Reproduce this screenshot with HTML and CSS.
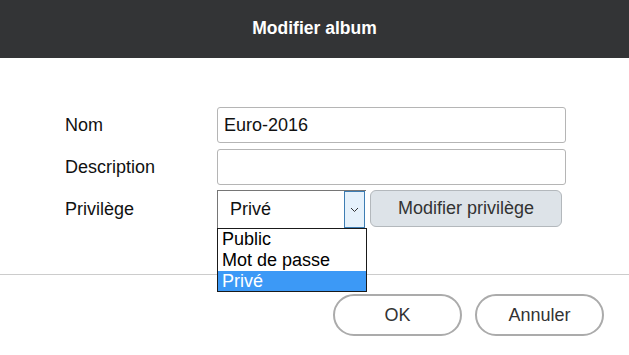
FILE: index.html
```html
<!DOCTYPE html>
<html lang="fr">
<head>
  <meta charset="utf-8">
  <title>Modifier album</title>
  <link rel="stylesheet" href="styles.css">
</head>
<body>
  <div class="dialog">
    <header class="dialog-head">Modifier album</header>

    <div class="form">
      <label class="form-label" for="album-name">Nom</label>
      <input class="field" id="album-name" type="text" value="Euro-2016">

      <label class="form-label" for="album-desc">Description</label>
      <input class="field" id="album-desc" type="text" value="">

      <span class="form-label">Privilège</span>
      <div class="privilege">
        <div class="select">
          <span class="select-value">Privé</span>
          <span class="select-arrow">
            <svg width="9" height="6" viewBox="0 0 9 6"><path d="M1 1l3.5 3.5L8 1" fill="none" stroke="#333" stroke-width="1"/></svg>
          </span>
          <ul class="select-list">
            <li>Public</li>
            <li>Mot de passe</li>
            <li class="is-selected">Privé</li>
          </ul>
        </div>
        <button class="button-grey" type="button">Modifier privilège</button>
      </div>
    </div>

    <footer class="dialog-foot">
      <button class="button-round" type="button">OK</button>
      <button class="button-round" type="button">Annuler</button>
    </footer>
  </div>
</body>
</html>
```

FILE: styles.css
```css
*, *::before, *::after {
  margin: 0;
  padding: 0;
  box-sizing: border-box;
}

body {
  background-color: #FFFFFF;
  color: #222222;
  font-size: 18px;
  font-family: "Liberation Sans", Arial, sans-serif;
}

.dialog-head {
  height: 58px;
  background-color: #333436;
  color: #FFFFFF;
  font-size: 17.5px;
  font-weight: bold;
  line-height: 56px;
  text-align: center;
}

.form {
  display: grid;
  grid-template-columns: 152px 349px;
  grid-auto-rows: 36px;
  row-gap: 6px;
  align-items: center;
  padding: 49px 0 0 65px;
  height: 216px;
}

.form-label {
  color: #111111;
}

.field {
  width: 100%;
  height: 100%;
  border: 1px solid #B5B5B5;
  border-radius: 3px;
  padding: 0 6px;
  color: #111111;
  font-size: 18px;
  font-family: inherit;
}

.privilege {
  display: flex;
  gap: 4px;
  height: 38px;
}

.select {
  position: relative;
  display: flex;
  align-items: center;
  width: 149px;
  border-top: 1px solid #767676;
  border-left: 1px solid #767676;
}

.select-value {
  flex: 1;
  padding-left: 12px;
  color: #111111;
}

.select-arrow {
  display: flex;
  align-items: center;
  justify-content: center;
  width: 21px;
  height: 100%;
  margin-right: 1px;
  border: 1px solid #3D7DB3;
  background-color: #E5F1FB;
}

.select-list {
  position: absolute;
  top: 100%;
  left: -1px;
  width: 150px;
  border: 1px solid #1A1A1A;
  background-color: #FFFFFF;
  list-style: none;
  z-index: 2;
}

.select-list li {
  height: 21px;
  padding-left: 4px;
  color: #000000;
  line-height: 21px;
}

.select-list .is-selected {
  height: 20px;
  background-color: #3C99F6;
  color: #FFFFFF;
  line-height: 20px;
}

.button-grey {
  width: 192px;
  height: 37px;
  border: 1px solid #B3B8BC;
  border-radius: 6px;
  background-color: #DDE3E8;
  color: #333333;
  font-size: 18px;
  font-family: inherit;
}

.dialog-foot {
  display: flex;
  justify-content: flex-end;
  gap: 13px;
  padding: 19px 25px 0 0;
  border-top: 1px solid #CCCCCC;
}

.button-round {
  width: 129px;
  height: 42px;
  border: 2px solid #ABABAB;
  border-radius: 21px;
  background-color: #FFFFFF;
  color: #333333;
  font-size: 18px;
  font-family: inherit;
}
```
